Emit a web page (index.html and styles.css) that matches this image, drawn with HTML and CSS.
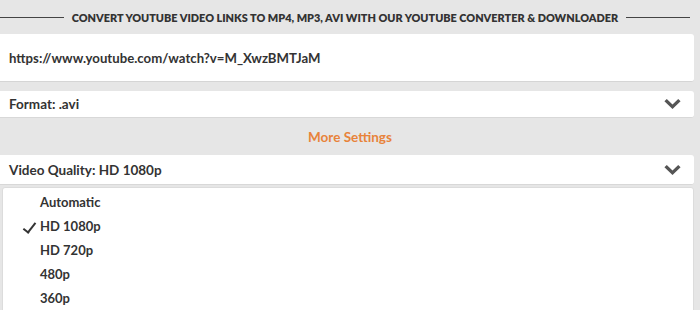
FILE: index.html
```html
<!DOCTYPE html>
<html lang="en">

<head>
  <meta charset="UTF-8">
  <meta name="viewport" content="width=device-width, initial-scale=1">
  <title>YouTube Converter</title>
  <link rel="stylesheet" href="styles.css">
</head>

<body>
  <div class="converter">
    <div class="converter__title">
      <span class="converter__line"></span>
      <h1>Convert YouTube video links to MP4, MP3, AVI with our YouTube converter &amp; downloader</h1>
      <span class="converter__line"></span>
    </div>

    <div class="converter__url">https://www.youtube.com/watch?v=M_XwzBMTJaM</div>

    <div class="select select--format">
      <span>Format: .avi</span>
      <svg class="select__chevron" viewBox="0 0 20 12" width="19" height="12">
        <path d="M1.5 3.2 L4 0.8 L10 6.6 L16 0.8 L18.5 3.2 L10 11.2 Z" fill="#555"/>
      </svg>
    </div>

    <div class="converter__more">More Settings</div>

    <div class="select select--quality">
      <span>Video Quality: HD 1080p</span>
      <svg class="select__chevron" viewBox="0 0 20 12" width="19" height="12">
        <path d="M1.5 3.2 L4 0.8 L10 6.6 L16 0.8 L18.5 3.2 L10 11.2 Z" fill="#555"/>
      </svg>
    </div>

    <ul class="dropdown">
      <li class="dropdown__item">Automatic</li>
      <li class="dropdown__item dropdown__item--checked">HD 1080p</li>
      <li class="dropdown__item">HD 720p</li>
      <li class="dropdown__item">480p</li>
      <li class="dropdown__item">360p</li>
    </ul>
  </div>
</body>

</html>
```

FILE: styles.css
```css
* {
  box-sizing: border-box;
  padding: 0;
  margin: 0;
}

body {
  font-family: Lato, "Open Sans", sans-serif;
  background-color: #e6e6e6;
  color: #333;
  overflow: hidden;
}

/* heading with rules on both sides */
.converter__title {
  height: 34px;
  display: flex;
  align-items: center;
  padding-right: 10px;
  gap: 8px;
}

.converter__title h1 {
  font-size: 10.9px;
  font-weight: 800;
  text-transform: uppercase;
  white-space: nowrap;
  color: #333;
}

.converter__line {
  flex: 1;
  height: 1px;
  background-color: #444;
}

/* url box */
.converter__url {
  height: 48px;
  margin-right: 6px;
  padding-left: 9px;
  display: flex;
  align-items: center;
  background-color: #fff;
  border-bottom: 1px solid #d5d5d5;
  border-radius: 0 3px 3px 0;
  font-size: 13.2px;
  font-weight: 700;
}

/* select rows */
.select {
  display: flex;
  align-items: center;
  justify-content: space-between;
  margin-right: 6px;
  padding: 0 12px 0 9px;
  background-color: #fff;
  border-bottom: 1px solid #d8d8d8;
  border-radius: 0 3px 3px 0;
  font-size: 13.5px;
  font-weight: 700;
}

.select--format {
  margin-top: 9px;
  height: 27px;
}

.select--quality {
  height: 30px;
}

.select__chevron {
  display: block;
}

.converter__more {
  height: 37px;
  display: flex;
  align-items: center;
  justify-content: center;
  color: #e8833a;
  font-size: 13.5px;
  font-weight: 700;
}

/* dropdown list */
.dropdown {
  list-style: none;
  margin: 2px 6px 0 2px;
  padding-top: 2px;
  height: 130px;
  background-color: #fff;
  border: 1px solid #dcdcdc;
  border-radius: 3px 3px 0 0;
}

.dropdown__item {
  position: relative;
  height: 24px;
  line-height: 24px;
  padding-left: 37px;
  font-size: 13px;
  font-weight: 700;
}

/* tick mark drawn with borders */
.dropdown__item--checked::before {
  content: "";
  position: absolute;
  left: 23px;
  top: 6px;
  width: 5px;
  height: 11px;
  border-right: 2px solid #333;
  border-bottom: 2px solid #333;
  transform: rotate(38deg);
}
```
